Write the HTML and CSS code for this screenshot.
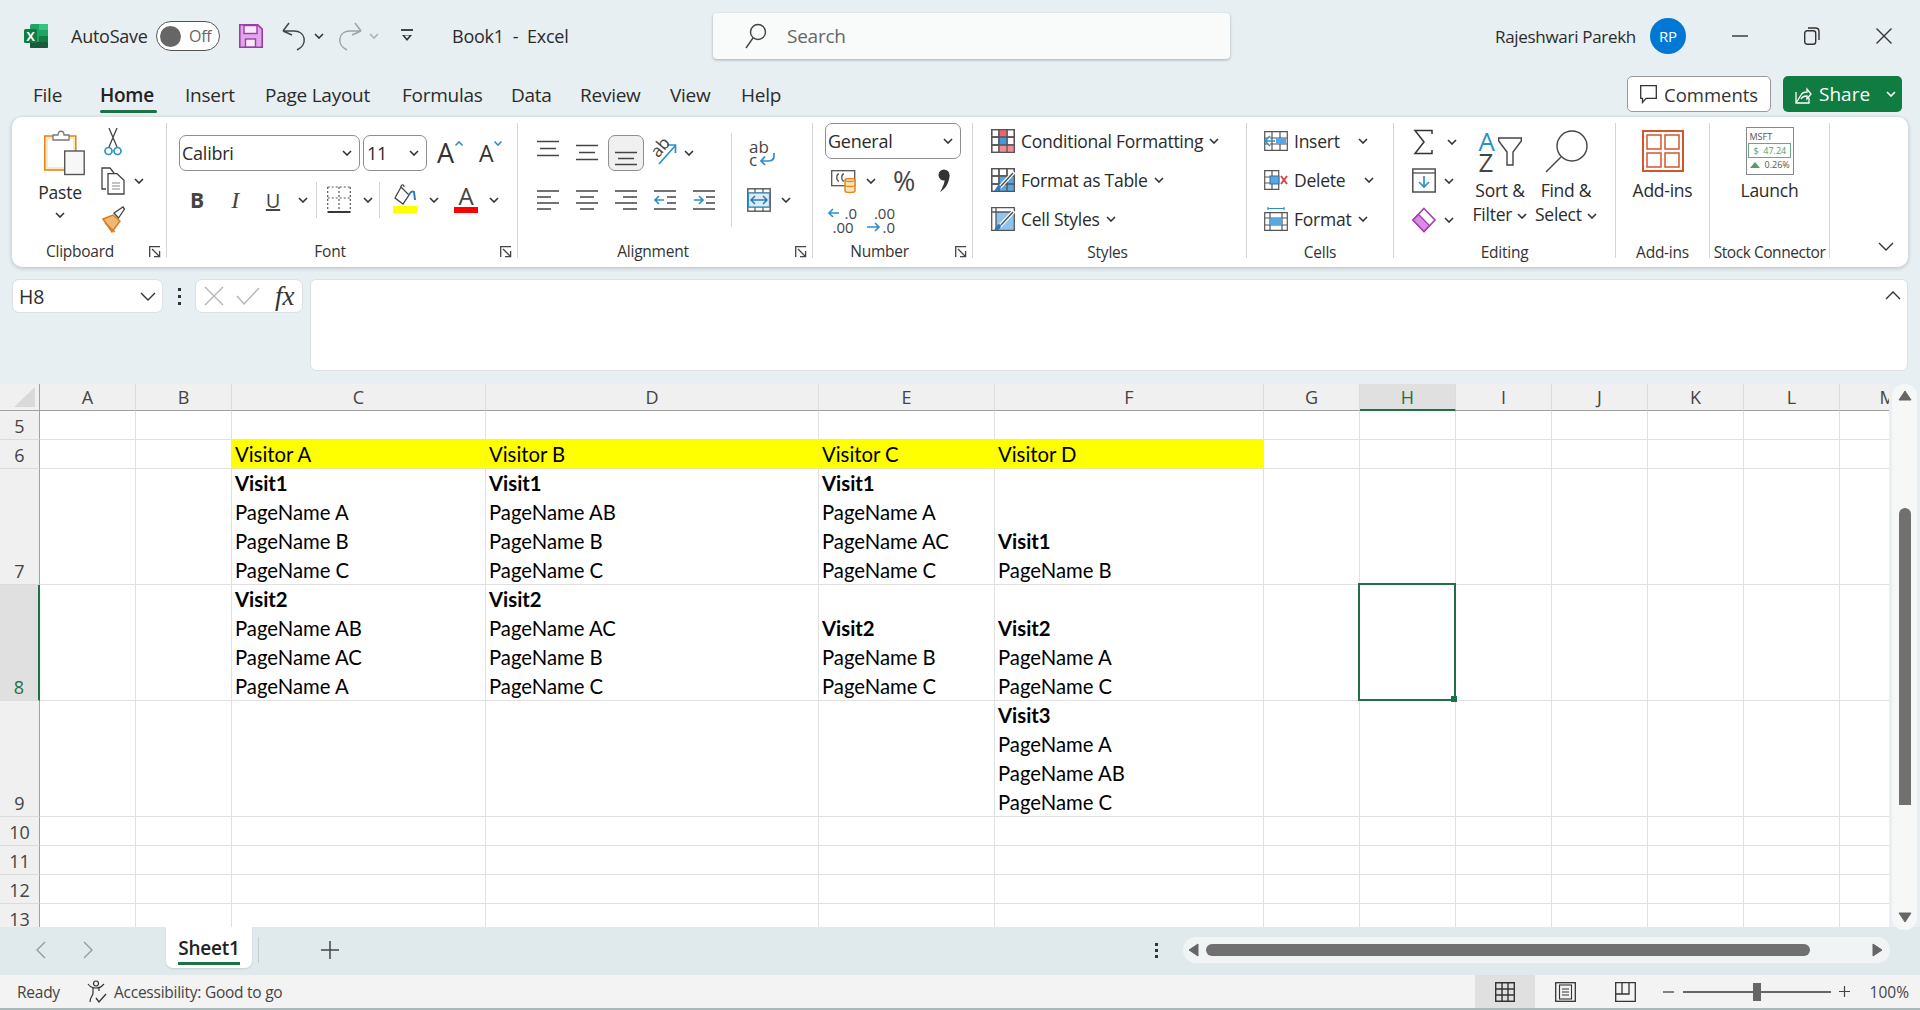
FILE: index.html
```html
<!DOCTYPE html>
<html lang="en">
<head>
<meta charset="utf-8">
<title>Book1 - Excel</title>
<link rel="stylesheet" href="styles.css">
</head>
<body>
<svg class="defs" xmlns="http://www.w3.org/2000/svg">
  <symbol id="chev" viewBox="0 0 10 6"><path d="M1 1l4 4 4-4" fill="none" stroke="currentColor" stroke-width="1.6"/></symbol>
  <symbol id="launch" viewBox="0 0 12 12"><path d="M.7 11V.7H11M3 3l7.5 7.5M10.6 5v5.6H5" fill="none" stroke="#444" stroke-width="1.3"/></symbol>
  <symbol id="grid" viewBox="0 0 24 24"><path d="M.7.7h22.6v22.6H.7zM.7 8h22.6M.7 16h22.6M8 .7v22.6M16 .7v22.6" fill="none" stroke="#555" stroke-width="1.3"/></symbol>
</svg>

<header class="titlebar">
  <div class="tb-left">
    <svg class="logo" viewBox="0 0 24 24"><rect x="6" width="18" height="24" rx="1.5" fill="#21a366"/><rect x="15" width="9" height="6" fill="#33c481"/><rect x="15" y="12" width="9" height="6" fill="#107c41"/><rect x="6" y="18" width="18" height="6" rx="1" fill="#185c37"/><rect y="5" width="13" height="14" rx="1.5" fill="#107c41"/><text x="6.5" y="16.5" class="logo-x" text-anchor="middle">X</text></svg>
    <span class="autosave">AutoSave</span>
    <div class="toggle"><i class="knob"></i><span>Off</span></div>
    <svg class="save" viewBox="0 0 24 24"><path d="M.8.8h18l4.4 4.4v18H.8z" fill="#e3a6e8" stroke="#9c3cab" stroke-width="1.6"/><rect x="5" y="1.5" width="13" height="8" fill="#f7eaf8" stroke="#9c3cab" stroke-width="1.4"/><rect x="6.500" y="15" width="10" height="8" fill="#f7eaf8" stroke="#9c3cab" stroke-width="1.4"/></svg>
    <svg class="undo" viewBox="0 0 24 30"><path d="M1 10l6-8M1 10l9 4M1 10h11c12 0 14 14 3 19" fill="none" stroke="#444" stroke-width="1.5"/></svg>
    <svg class="chev qa1"><use href="#chev"/></svg>
    <svg class="undo redo" viewBox="0 0 24 30"><path d="M23 10l-6-8M23 10l-9 4M23 10H12C0 10-2 24 9 29" fill="none" stroke="#a3a3a3" stroke-width="1.5"/></svg>
    <svg class="chev qa2"><use href="#chev"/></svg>
    <svg class="custom" viewBox="0 0 12 14"><path d="M0 1h12" stroke="#333" stroke-width="1.8"/><path d="M1 6h10l-5 6z" fill="#333"/><path d="M3.500 6.500h5L6 9.500z" fill="#e7eff2"/></svg>
    <span class="doc">Book1&nbsp; -&nbsp; Excel</span>
  </div>
  <div class="search">
    <svg class="search-ico" viewBox="0 0 22 26"><circle cx="13" cy="9" r="7.500" fill="none" stroke="#444" stroke-width="1.4"/><path d="M8 15L1 25" stroke="#444" stroke-width="1.4"/></svg>
    <span>Search</span>
  </div>
  <div class="tb-right">
    <span class="user">Rajeshwari Parekh</span>
    <span class="avatar">RP</span>
    <div class="win"><svg width="16" height="4"><path d="M0 2h16" stroke="#333" stroke-width="1.4"/></svg></div>
    <div class="win"><svg width="16" height="18" viewBox="0 0 16 18"><rect x=".7" y="3.700" width="11" height="13.500" rx="2.500" fill="none" stroke="#333" stroke-width="1.4"/><path d="M4 1h7.500c2 0 3.500 1 3.500 3.500V13" fill="none" stroke="#333" stroke-width="1.4"/></svg></div>
    <div class="win"><svg width="16" height="16"><path d="M.5.5l15 15M15.500.5l-15 15" stroke="#333" stroke-width="1.4"/></svg></div>
  </div>
</header>

<nav class="tabs">
  <a class="tab t-file">File</a>
  <a class="tab t-home active"><span>Home</span></a>
  <a class="tab t-insert">Insert</a>
  <a class="tab t-page">Page Layout</a>
  <a class="tab t-formulas">Formulas</a>
  <a class="tab t-data">Data</a>
  <a class="tab t-review">Review</a>
  <a class="tab t-view">View</a>
  <a class="tab t-help">Help</a>
  <div class="tab-actions">
    <button class="comments"><svg width="17" height="19" viewBox="0 0 17 19"><path d="M.7.7h15.600v12.600H6L2.500 17.500v-4.200H.7z" fill="none" stroke="#333" stroke-width="1.3"/></svg>Comments</button>
    <button class="share"><svg width="17" height="20" viewBox="0 0 17 20"><path d="M1 8v11h13v-5M1 19l5-8c1-2 3-3 6-3V5l4 5-4 5v-3c-3 0-5 1-6 3" fill="none" stroke="#fff" stroke-width="1.300"/></svg><span>Share</span><svg class="chev"><use href="#chev"/></svg></button>
  </div>
</nav>

<section class="ribbon">
  <div class="group g-clip">
    <div class="body">
      <div class="paste">
        <svg class="paste-ico" width="41" height="45" viewBox="0 0 41 45"><rect x=".8" y="6" width="31" height="34" fill="#fde8c4" stroke="#e08a1e" stroke-width="1.600"/><rect x="4" y="9" width="25" height="28" fill="#fff"/><path d="M9 10V5h5c0-5 6-5 6 0h5v5z" fill="#fff" stroke="#777" stroke-width="1.300"/><rect x="20.700" y="21" width="19.500" height="23.500" fill="#f7f7f7" stroke="#555" stroke-width="1.400"/></svg>
        <span class="paste-l">Paste</span>
        <svg class="chev"><use href="#chev"/></svg>
      </div>
      <div class="rows clip-rows">
        <div class="row"><svg width="18" height="30" viewBox="0 0 18 30"><path d="M5 1l8 19M13 1L5 20" stroke="#444" stroke-width="1.300"/><circle cx="4.500" cy="24" r="3.500" fill="none" stroke="#2e8fc9" stroke-width="1.700"/><circle cx="13.500" cy="24" r="3.500" fill="none" stroke="#2e8fc9" stroke-width="1.700"/></svg></div>
        <div class="row copy-row"><svg width="24" height="28" viewBox="0 0 24 28"><path d="M5 22H1V1h8l4 5" fill="none" stroke="#444" stroke-width="1.300"/><path d="M7 6.700h9l7 6.500V27H7z" fill="#fff" stroke="#444" stroke-width="1.300"/><path d="M11 16h8M11 19h8M11 22h8" stroke="#888" stroke-width="1.200"/></svg><svg class="chev"><use href="#chev"/></svg></div>
        <div class="row brush-row"><svg width="24" height="28" viewBox="0 0 24 28"><path d="M13 7l9-6 1.500 2-6 9z" fill="#fff" stroke="#444" stroke-width="1.300"/><path d="M2 13l10-4 7 6-8 11z" fill="#f0b878" stroke="#d97c1c" stroke-width="1.500"/><path d="M4 17l10 9" stroke="#d97c1c" stroke-width="1.500"/></svg></div>
      </div>
    </div>
    <div class="label pr18">Clipboard</div>
    <svg class="launch"><use href="#launch"/></svg>
  </div>

  <div class="group g-font">
    <div class="body two-rows">
      <div class="r2">
        <div class="select s-font"><span>Calibri</span><svg class="chev"><use href="#chev"/></svg></div>
        <div class="select s-size"><span>11</span><svg class="chev"><use href="#chev"/></svg></div>
        <div class="grow"><span>A</span><svg width="8" height="5"><path d="M.5 4.500l3.500-3.500 3.500 3.500" fill="none" stroke="#2e8fc9" stroke-width="1.600"/></svg></div>
        <div class="grow shrink"><span>A</span><svg width="8" height="5"><path d="M.5.5l3.500 3.500 3.500-3.500" fill="none" stroke="#2e8fc9" stroke-width="1.600"/></svg></div>
      </div>
      <div class="r2 fmt-row">
        <b class="slot38 f-b">B</b>
        <i class="slot38 f-i">I</i>
        <u class="slot38 f-u">U</u>
        <div class="slot22"><svg class="chev"><use href="#chev"/></svg></div>
        <div class="vsep"></div>
        <div class="slot40"><svg width="24" height="28" viewBox="0 0 24 28"><path d="M.7 1h22.600M.7 1v22M23.300 1v22M12 1v22M.7 12h22.600" stroke="#555" stroke-width="1.200" stroke-dasharray="2 2" fill="none"/><path d="M.5 26h23" stroke="#222" stroke-width="1.800"/></svg></div>
        <div class="slot18"><svg class="chev"><use href="#chev"/></svg></div>
        <div class="vsep"></div>
        <div class="slot40 fill-slot"><svg width="24" height="30" viewBox="0 0 24 30"><path d="M8 2l8 8-6 9-8-6z" fill="#fff" stroke="#444" stroke-width="1.300"/><path d="M8 2c0-3 3-3 3 0" fill="none" stroke="#444" stroke-width="1.200"/><path d="M16 10c1-3 3-4 5-3l1 8" fill="none" stroke="#2e78b8" stroke-width="2"/><rect y="21" width="24" height="7" fill="#ffff00"/></svg></div>
        <div class="slot18"><svg class="chev"><use href="#chev"/></svg></div>
        <div class="font-color"><span>A</span><i></i></div>
        <div class="slot18"><svg class="chev"><use href="#chev"/></svg></div>
      </div>
    </div>
    <div class="label pr24">Font</div>
    <svg class="launch"><use href="#launch"/></svg>
  </div>

  <div class="group g-align">
    <div class="al-left two-rows">
      <div class="r2">
        <div class="slot39"><svg width="22" height="26"><path d="M0 1.500h22M3 8.500h16M0 15.500h22" stroke="#444" stroke-width="1.600"/></svg></div>
        <div class="slot39"><svg width="22" height="26"><path d="M0 5.500h22M3 12.500h16M0 19.500h22" stroke="#444" stroke-width="1.600"/></svg></div>
        <div class="slot39"><div class="active-btn"><svg width="22" height="26"><path d="M0 12.500h22M3 18.500h16M0 24.500h22" stroke="#444" stroke-width="1.600"/></svg></div></div>
        <div class="slot39 orient"><span>ab</span><svg width="26" height="26" viewBox="0 0 26 26"><path d="M7 24L23 6M15 5h8.500v8" fill="none" stroke="#2e8fc9" stroke-width="1.700"/></svg></div>
        <svg class="chev al-chev"><use href="#chev"/></svg>
      </div>
      <div class="r2">
        <div class="slot39"><svg width="22" height="22"><path d="M0 2h22M0 8h14M0 14h22M0 20h14" stroke="#444" stroke-width="1.600"/></svg></div>
        <div class="slot39"><svg width="22" height="22"><path d="M0 2h22M4 8h14M0 14h22M4 20h14" stroke="#444" stroke-width="1.600"/></svg></div>
        <div class="slot39"><svg width="22" height="22"><path d="M0 2h22M8 8h14M0 14h22M8 20h14" stroke="#444" stroke-width="1.600"/></svg></div>
        <div class="slot39"><svg width="22" height="22"><path d="M0 2h22M13 8h9M13 14h9M0 20h22" stroke="#444" stroke-width="1.600"/><path d="M1 11h9M5 7l-4 4 4 4" fill="none" stroke="#2e8fc9" stroke-width="1.700"/></svg></div>
        <div class="slot39"><svg width="22" height="22"><path d="M0 2h22M13 8h9M13 14h9M0 20h22" stroke="#444" stroke-width="1.600"/><path d="M1 11h9M6 7l4 4-4 4" fill="none" stroke="#2e8fc9" stroke-width="1.700"/></svg></div>
      </div>
    </div>
    <div class="vsep tall"></div>
    <div class="al-right two-rows">
      <div class="r2"><div class="slot50"><div class="wrap-ico"><span>ab</span><span>c</span><svg width="15" height="13" viewBox="0 0 15 13"><path d="M14 0v3c0 4-3 5-6 5H1M5 3.500L1 8l4 4" fill="none" stroke="#2e8fc9" stroke-width="1.700"/></svg></div></div></div>
      <div class="r2"><div class="slot44"><svg width="24" height="24" viewBox="0 0 24 24"><rect x=".8" y=".8" width="22.400" height="22.400" fill="#fff" stroke="#555" stroke-width="1.400"/><path d="M.8 5h22.400M.8 19h22.400M8 .8V5M16 .8V5M8 19v4M16 19v4" stroke="#555" stroke-width="1.200"/><rect x="1.500" y="5" width="21" height="14" fill="#dcecf7" stroke="#2e8fc9" stroke-width="1.200"/><path d="M4 12h16M8 8l-4 4 4 4M16 8l4 4-4 4" fill="none" stroke="#2e78b8" stroke-width="1.500"/></svg></div><svg class="chev"><use href="#chev"/></svg></div>
    </div>
    <div class="label abs-label pr24">Alignment</div>
    <svg class="launch"><use href="#launch"/></svg>
  </div>

  <div class="group g-num">
    <div class="body rows num-rows">
      <div class="row"><div class="select s-gen"><span>General</span><svg class="chev"><use href="#chev"/></svg></div></div>
      <div class="row">
        <div class="slot36"><svg width="25" height="26" viewBox="0 0 25 26"><rect x=".7" y="2.700" width="23" height="15" fill="#fff" stroke="#555" stroke-width="1.300"/><path d="M8 6c-3 0-3 7 0 7M13 6c-3 0-3 7 0 7" fill="none" stroke="#555" stroke-width="1.300"/><path d="M14 12c0-2 10-2 10 0v11c0 2-10 2-10 0z" fill="#fbe3bd" stroke="#e08a1e" stroke-width="1.500"/><path d="M14 12c0 2 10 2 10 0M14 17c0 2 10 2 10 0" fill="none" stroke="#e08a1e" stroke-width="1.300"/></svg></div>
        <div class="slot20"><svg class="chev"><use href="#chev"/></svg></div>
        <div class="slot46 pct">%</div>
        <div class="slot34"><svg width="12" height="24" viewBox="0 0 12 24"><circle cx="6" cy="6" r="5.500" fill="#333"/><path d="M11.500 6C11.500 14 7 20 2 23 5 18 7 13 7 8z" fill="#333"/></svg></div>
      </div>
      <div class="row">
        <div class="slot36"><div class="dec-ico"><span class="dec-r">.0</span><span>.00</span><svg class="dec-top" width="12" height="12" viewBox="0 0 12 12"><path d="M11 6H1M5 2L1 6l4 4" fill="none" stroke="#2e8fc9" stroke-width="1.600"/></svg></div></div>
        <div class="slot40"><div class="dec-ico"><span class="dec-r">.00</span><span class="dec-r">.0</span><svg class="dec-bot" width="14" height="12" viewBox="0 0 14 12"><path d="M1 6h12M9 2l4 4-4 4" fill="none" stroke="#2e8fc9" stroke-width="1.600"/></svg></div></div>
      </div>
    </div>
    <div class="label pr26">Number</div>
    <svg class="launch"><use href="#launch"/></svg>
  </div>

  <div class="group g-styles">
    <div class="body rows">
      <div class="row ti"><svg width="24" height="24"><use href="#grid"/><rect x="8" y="1" width="8" height="7" fill="#f1636c"/><rect x="8" y="8" width="8" height="8" fill="#3f9be0"/><rect x="8" y="16" width="15" height="7" fill="#f58b92"/><use href="#grid"/></svg><span>Conditional Formatting</span><svg class="chev"><use href="#chev"/></svg></div>
      <div class="row ti"><svg width="24" height="24" viewBox="0 0 24 24"><use href="#grid"/><path d="M8 8h15v15H8z" fill="#5aa6e0"/><use href="#grid"/><path d="M23 4L8 20" stroke="#fff" stroke-width="4"/><path d="M22 5L10 18" stroke="#555" stroke-width="1.500"/><path d="M3 23c3 0 7 0 7-5l-2-1c-2 0-2 3-5 6z" fill="#2e78b8"/></svg><span>Format as Table</span><svg class="chev"><use href="#chev"/></svg></div>
      <div class="row ti"><svg width="24" height="24" viewBox="0 0 24 24"><path d="M5 5h18v18H5z" fill="#8cc4ee"/><path d="M.7.7h22.600v22.600H.7zM.7 5h22.600M5 .7v22.600" fill="none" stroke="#555" stroke-width="1.300"/><path d="M23 4L8 20" stroke="#fff" stroke-width="4"/><path d="M22 5L10 18" stroke="#555" stroke-width="1.500"/><path d="M3 23c3 0 7 0 7-5l-2-1c-2 0-2 3-5 6z" fill="#2e78b8"/></svg><span>Cell Styles</span><svg class="chev"><use href="#chev"/></svg></div>
    </div>
    <div class="label low pr4">Styles</div>
  </div>

  <div class="group g-cells">
    <div class="body rows">
      <div class="row ti"><svg width="24" height="20" viewBox="0 0 24 20"><path d="M.7.700h22.600v18.600H.7zM.7 7h22.600M.7 13h22.600M8 .7v18.600M16 .7v18.600" fill="none" stroke="#555" stroke-width="1.200"/><rect x="12" y="7" width="10" height="6" fill="#5aa6e0"/><path d="M1 10h10M6 5l-5 5 5 5" fill="#fff" stroke="#2e8fc9" stroke-width="1.600"/></svg><span class="w58">Insert</span><svg class="chev"><use href="#chev"/></svg></div>
      <div class="row ti"><svg width="24" height="20" viewBox="0 0 24 20"><path d="M.7.700h14v18.600H.7zM.7 7h14M.7 13h14M8 .7v18.600" fill="none" stroke="#555" stroke-width="1.200"/><rect x="6" y="6" width="9" height="8" fill="#5aa6e0" stroke="#2e6fa8"/><path d="M17 6l6 8M23 6l-6 8" stroke="#e04040" stroke-width="2"/></svg><span class="w64">Delete</span><svg class="chev"><use href="#chev"/></svg></div>
      <div class="row ti"><svg width="24" height="24" viewBox="0 0 24 24"><path d="M.7 5.700h22.600v17.600H.7zM.7 11h22.600M.7 18h22.600M6 5.700v17.600M18 5.700v17.600" fill="none" stroke="#555" stroke-width="1.200"/><rect x="6" y="11" width="12" height="7" fill="#5aa6e0"/><path d="M4 1.500h16M4 0v3M20 0v3" stroke="#2e8fc9" stroke-width="1.200"/></svg><span class="w58">Format</span><svg class="chev"><use href="#chev"/></svg></div>
    </div>
    <div class="label low">Cells</div>
  </div>

  <div class="group g-edit">
    <div class="body">
      <div class="rows edit-rows">
        <div class="row sum-row"><svg width="24" height="26" viewBox="0 0 24 26"><path d="M20 5V1.500H3L12 13 3 24.500h17V21" fill="none" stroke="#333" stroke-width="1.500"/></svg><svg class="chev"><use href="#chev"/></svg></div>
        <div class="row"><svg width="24" height="26" viewBox="0 0 24 26"><rect x=".8" y="1" width="22.400" height="23" fill="#fff" stroke="#444" stroke-width="1.400"/><path d="M.8 5h22.400" stroke="#444" stroke-width="1.200"/><path d="M12 8v11M7 14l5 5 5-5" fill="none" stroke="#2e8fc9" stroke-width="1.700"/></svg><svg class="chev"><use href="#chev"/></svg></div>
        <div class="row"><svg width="24" height="26" viewBox="0 0 24 26"><path d="M12 1.500L23 13 12 24.500 1 13z" fill="#fff" stroke="#a43bb4" stroke-width="1.600"/><path d="M1 13l5.500-5.500 11 11L12 24.500z" fill="#d98ce2" stroke="#a43bb4" stroke-width="1.300"/></svg><svg class="chev"><use href="#chev"/></svg></div>
      </div>
      <div class="big b-sort">
        <div class="sort-ico"><div class="az"><span class="blue">A</span><span>Z</span></div><svg width="24" height="30" viewBox="0 0 24 30"><path d="M.7 1h22.600v3L15 15v13H9V15L.7 4z" fill="#fff" stroke="#444" stroke-width="1.400"/></svg></div>
        <span>Sort &amp;</span>
        <span>Filter <svg class="chev"><use href="#chev"/></svg></span>
      </div>
      <div class="big b-find">
        <svg width="43" height="43" viewBox="0 0 43 43"><circle cx="27" cy="16" r="15" fill="#fff" stroke="#444" stroke-width="1.400"/><path d="M16 27L1 42" stroke="#444" stroke-width="1.400"/></svg>
        <span>Find &amp;</span>
        <span>Select <svg class="chev"><use href="#chev"/></svg></span>
      </div>
    </div>
    <div class="label low">Editing</div>
  </div>

  <div class="group g-addins">
    <div class="body big-one">
      <svg width="42" height="42" viewBox="0 0 42 42"><rect x="1" y="1" width="40" height="40" fill="#fff" stroke="#d2562c" stroke-width="2"/><rect x="5" y="5" width="14" height="14" fill="#fff" stroke="#d2562c" stroke-width="1.500"/><rect x="23" y="5" width="14" height="14" fill="#fff" stroke="#d2562c" stroke-width="1.500"/><rect x="5" y="23" width="14" height="14" fill="#fff" stroke="#d2562c" stroke-width="1.500"/><rect x="23" y="23" width="14" height="14" fill="#fff" stroke="#d2562c" stroke-width="1.500"/></svg>
      <span>Add-ins</span>
    </div>
    <div class="label low">Add-ins</div>
  </div>

  <div class="group g-stock">
    <div class="body big-one stock">
      <div class="stock-ico">
        <span class="st-sym">MSFT</span>
        <span class="st-price">$&nbsp;&nbsp;47.24</span>
        <span class="st-chg"><svg width="10" height="6"><path d="M0 6l5-6 5 6z" fill="#4f9e6a"/></svg>0.26%</span>
      </div>
      <span>Launch</span>
    </div>
    <div class="label low stock-l">Stock Connector</div>
  </div>

  <div class="ribbon-end"><svg width="16" height="9" viewBox="0 0 16 9"><path d="M1 1l7 7 7-7" fill="none" stroke="#333" stroke-width="1.400"/></svg></div>
</section>

<section class="formula">
  <div class="namebox"><span>H8</span><svg width="16" height="9" viewBox="0 0 16 9"><path d="M1 1l7 7 7-7" fill="none" stroke="#333" stroke-width="1.400"/></svg></div>
  <div class="dots"><i></i><i></i><i></i></div>
  <div class="fxbox">
    <svg width="20" height="20"><path d="M1 1l18 18M19 1L1 19" stroke="#b5b5b5" stroke-width="1.400"/></svg>
    <svg width="24" height="18"><path d="M1 9l7 8L23 1" fill="none" stroke="#b5b5b5" stroke-width="1.400"/></svg>
    <em>fx</em>
  </div>
  <div class="finput"><svg width="16" height="9" viewBox="0 0 16 9"><path d="M1 8l7-7 7 7" fill="none" stroke="#333" stroke-width="1.400"/></svg></div>
</section>

<main class="sheet">
  <div class="grid">
    <div class="corner"><svg width="21" height="20"><path d="M21 0v20H0z" fill="#d9d9d9"/></svg></div>
    <div class="ch">A</div><div class="ch">B</div><div class="ch">C</div><div class="ch">D</div><div class="ch">E</div><div class="ch">F</div><div class="ch">G</div><div class="ch sel">H</div><div class="ch">I</div><div class="ch">J</div><div class="ch">K</div><div class="ch">L</div><div class="ch">M</div>

    <div class="rh">5</div><div class="c"></div><div class="c"></div><div class="c"></div><div class="c"></div><div class="c"></div><div class="c"></div><div class="c"></div><div class="c"></div><div class="c"></div><div class="c"></div><div class="c"></div><div class="c"></div><div class="c"></div>

    <div class="rh">6</div><div class="c"></div><div class="c"></div><div class="c y"><span>Visitor A</span></div><div class="c y"><span>Visitor B</span></div><div class="c y"><span>Visitor C</span></div><div class="c y"><span>Visitor D</span></div><div class="c"></div><div class="c"></div><div class="c"></div><div class="c"></div><div class="c"></div><div class="c"></div><div class="c"></div>

    <div class="rh">7</div><div class="c"></div><div class="c"></div>
    <div class="c"><b>Visit1</b><span>PageName A</span><span>PageName B</span><span>PageName C</span></div>
    <div class="c"><b>Visit1</b><span>PageName AB</span><span>PageName B</span><span>PageName C</span></div>
    <div class="c"><b>Visit1</b><span>PageName A</span><span>PageName AC</span><span>PageName C</span></div>
    <div class="c"><b>Visit1</b><span>PageName B</span></div>
    <div class="c"></div><div class="c"></div><div class="c"></div><div class="c"></div><div class="c"></div><div class="c"></div><div class="c"></div>

    <div class="rh sel">8</div><div class="c"></div><div class="c"></div>
    <div class="c"><b>Visit2</b><span>PageName AB</span><span>PageName AC</span><span>PageName A</span></div>
    <div class="c"><b>Visit2</b><span>PageName AC</span><span>PageName B</span><span>PageName C</span></div>
    <div class="c"><b>Visit2</b><span>PageName B</span><span>PageName C</span></div>
    <div class="c"><b>Visit2</b><span>PageName A</span><span>PageName C</span></div>
    <div class="c"></div>
    <div class="c active-cell"><div class="selection"><i class="handle"></i></div></div>
    <div class="c"></div><div class="c"></div><div class="c"></div><div class="c"></div><div class="c"></div>

    <div class="rh">9</div><div class="c"></div><div class="c"></div><div class="c"></div><div class="c"></div><div class="c"></div>
    <div class="c"><b>Visit3</b><span>PageName A</span><span>PageName AB</span><span>PageName C</span></div>
    <div class="c"></div><div class="c"></div><div class="c"></div><div class="c"></div><div class="c"></div><div class="c"></div><div class="c"></div>

    <div class="rh">10</div><div class="c"></div><div class="c"></div><div class="c"></div><div class="c"></div><div class="c"></div><div class="c"></div><div class="c"></div><div class="c"></div><div class="c"></div><div class="c"></div><div class="c"></div><div class="c"></div><div class="c"></div>
    <div class="rh">11</div><div class="c"></div><div class="c"></div><div class="c"></div><div class="c"></div><div class="c"></div><div class="c"></div><div class="c"></div><div class="c"></div><div class="c"></div><div class="c"></div><div class="c"></div><div class="c"></div><div class="c"></div>
    <div class="rh">12</div><div class="c"></div><div class="c"></div><div class="c"></div><div class="c"></div><div class="c"></div><div class="c"></div><div class="c"></div><div class="c"></div><div class="c"></div><div class="c"></div><div class="c"></div><div class="c"></div><div class="c"></div>
    <div class="rh">13</div><div class="c"></div><div class="c"></div><div class="c"></div><div class="c"></div><div class="c"></div><div class="c"></div><div class="c"></div><div class="c"></div><div class="c"></div><div class="c"></div><div class="c"></div><div class="c"></div><div class="c"></div>
  </div>
  <aside class="vscroll">
    <div class="vtrack">
      <svg width="14" height="11" class="vup"><path d="M7 1l6 9H1z" fill="#666" stroke="#666" stroke-linejoin="round"/></svg>
      <div class="vthumb"></div>
      <svg width="14" height="11" class="vdown"><path d="M7 10l6-9H1z" fill="#666" stroke="#666" stroke-linejoin="round"/></svg>
    </div>
  </aside>
</main>

<footer class="sheetbar">
  <div class="nav"><svg width="11" height="18"><path d="M10 1L2 9l8 8" fill="none" stroke="#999" stroke-width="1.400"/></svg></div>
  <div class="nav"><svg width="11" height="18"><path d="M1 1l8 8-8 8" fill="none" stroke="#999" stroke-width="1.400"/></svg></div>
  <div class="sheet-tab"><span>Sheet1</span></div>
  <div class="tab-sep"></div>
  <svg class="plus" width="18" height="18"><path d="M9 0v18M0 9h18" stroke="#444" stroke-width="1.500"/></svg>
  <div class="vdots"><i></i><i></i><i></i></div>
  <div class="htrack">
    <svg width="11" height="14"><path d="M10 1L1 7l9 6z" fill="#666" stroke="#666" stroke-linejoin="round"/></svg>
    <div class="hthumb"></div>
    <svg width="11" height="14"><path d="M1 1l9 6-9 6z" fill="#666" stroke="#666" stroke-linejoin="round"/></svg>
  </div>
</footer>

<footer class="status">
  <span class="ready">Ready</span>
  <svg class="acc" width="20" height="24" viewBox="0 0 20 24"><circle cx="9" cy="3.500" r="2.500" fill="none" stroke="#333" stroke-width="1.200"/><path d="M1 4c2 3 4 4 8 4s5-1 8-4M6 8v5c0 3-3 4-3 9M12 8v3" fill="none" stroke="#333" stroke-width="1.200"/><path d="M9 18l3 4 7-8" fill="none" stroke="#333" stroke-width="1.300"/></svg>
  <span class="acc-t">Accessibility: Good to go</span>
  <div class="st-right">
    <div class="view on"><svg width="20" height="20"><path d="M.7.700h18.600v18.600H.7zM.7 7h18.600M.7 13h18.600M7 .7v18.600M13 .7v18.600" fill="none" stroke="#333" stroke-width="1.400"/></svg></div>
    <div class="view"><svg width="21" height="20"><rect x=".7" y=".7" width="19.600" height="18.600" fill="none" stroke="#333" stroke-width="1.300"/><rect x="4.500" y="3" width="12" height="14" fill="none" stroke="#333" stroke-width="1.100"/><path d="M7 7h7M7 10h7M7 13h7" stroke="#333"/></svg></div>
    <div class="view"><svg width="21" height="20"><path d="M.7.7h19.600v18.600H.7zM.7 12H14V.7M7 .7V12" fill="none" stroke="#333" stroke-width="1.300"/></svg></div>
    <svg class="zm" width="11" height="2"><path d="M0 1h11" stroke="#444" stroke-width="1.300"/></svg>
    <div class="slider"><i></i></div>
    <svg class="zp" width="11" height="11"><path d="M0 5.500h11M5.500 0v11" stroke="#444" stroke-width="1.200"/></svg>
    <span class="pct100">100%</span>
  </div>
</footer>
</body>
</html>
```

FILE: styles.css
```css
* { box-sizing: border-box; }
html, body { margin: 0; padding: 0; }
body {
  width: 1920px; height: 1010px; overflow: hidden;
  display: flex; flex-direction: column;
  background: #e7eff2; color: #2b2b2b;
  font-family: "Open Sans", "Noto Sans", sans-serif;
  font-size: 17px; letter-spacing: -.25px;
}
svg { display: block; flex: none; overflow: visible; }
.defs { display: none; }
.chev { width: 10px; height: 6px; color: #333; }

/* title bar */
.titlebar { height: 72px; display: flex; align-items: center; flex: none; }
.tb-left { width: 713px; display: flex; align-items: center; padding-left: 24px; flex: none; }
.logo { width: 24px; height: 24px; }
.logo-x { fill: #fff; font: 700 13px "Liberation Sans", sans-serif; }
.autosave { width: 85px; margin-left: 23px; font-size: 18px; }
.toggle { width: 64px; height: 30px; border: 1.5px solid #555; border-radius: 15px; background: #fff; display: flex; align-items: center; padding-left: 3px; }
.knob { width: 21px; height: 21px; margin-right: 8px; border-radius: 50%; background: #666; flex: none; }
.toggle span { font-size: 16px; color: #666; }
.save { width: 24px; height: 24px; margin-left: 19px; }
.undo { width: 24px; height: 30px; margin-left: 19px; }
.qa1 { margin-left: 8px; }
.redo { margin-left: 14px; }
.qa2 { margin-left: 7px; color: #b0b0b0; }
.custom { width: 12px; height: 14px; margin-left: 22px; }
.doc { margin-left: 39px; font-size: 18px; }
.search { width: 517px; height: 46px; background: #f9fafa; border-radius: 4px; box-shadow: 0 1px 3px rgba(0,0,0,.28); display: flex; align-items: center; padding-left: 32px; color: #666; font-size: 19px; flex: none; }
.search-ico { width: 22px; height: 26px; margin-right: 20px; }
.tb-right { margin-left: auto; display: flex; align-items: center; }
.user { margin-right: 14px; font-size: 17px; letter-spacing: -.3px; }
.avatar { width: 36px; height: 36px; margin-right: 18px; border-radius: 50%; background: #0078d4; color: #fff; display: flex; align-items: center; justify-content: center; font-size: 15px; }
.win { width: 72px; display: flex; justify-content: center; }

/* tabs */
.tabs { height: 45px; display: flex; align-items: center; flex: none; padding: 0 18px 0 33px; font-size: 19px; }
.tab { display: block; flex: none; }
.t-file { width: 67px; }
.t-home { width: 85px; font-weight: 600; color: #222; }
.t-home span { position: relative; display: block; width: 57px; }
.t-home span::after { content: ""; position: absolute; left: 0; right: 0; bottom: -5px; height: 3px; border-radius: 2px; background: #1e7145; }
.t-insert { width: 80px; }
.t-page { width: 137px; }
.t-formulas { width: 109px; }
.t-data { width: 69px; }
.t-review { width: 90px; }
.t-view { width: 71px; }
.t-help { width: 60px; }
.tab-actions { margin-left: auto; display: flex; gap: 12px; align-self: flex-start; padding-top: 4px; }
.comments, .share { height: 36px; border-radius: 5px; display: flex; align-items: center; font: inherit; padding: 0; }
.comments { width: 144px; background: #fff; border: 1px solid #999; gap: 7px; padding-left: 12px; color: #333; font-size: 18.500px; }
.share { width: 119px; background: #107c41; border: 0; color: #fff; padding-left: 12px; gap: 7px; font-size: 19px; }
.share .chev { color: #fff; margin-left: 9px; }

/* ribbon */
.ribbon { height: 150px; margin: 0 12px; padding-top: 6px; background: #fff; border-radius: 10px; box-shadow: 0 1px 4px rgba(0,0,0,.22); display: flex; flex: none; font-size: 17.500px; }
.group { position: relative; height: 135px; border-right: 1px solid #d4d4d4; flex: none; }
.body { height: 115px; display: flex; }
.label { height: 26px; line-height: 26px; text-align: center; font-size: 15.500px; color: #333; white-space: nowrap; }
.abs-label { position: absolute; left: 0; right: 0; top: 115px; }
.low { margin-top: 1px; }
.pr18 { padding-right: 18px; }
.pr24 { padding-right: 24px; }
.pr26 { padding-right: 26px; }
.pr4 { padding-right: 4px; }
.launch { position: absolute; right: 5px; bottom: 0; width: 12px; height: 12px; }
.rows { display: grid; grid-auto-rows: 39px; margin-top: -1px; }
.body.rows { height: 116px; }
.g-styles .body.rows, .g-cells .body.rows { height: 117px; margin-top: -2px; }
.row { display: flex; align-items: center; }
.r2 { height: 36px; display: flex; align-items: center; }
.two-rows { display: flex; flex-direction: column; gap: 11px; padding-top: 12px; }
.g-clip { width: 155px; }
.g-font { width: 351px; }
.g-align { width: 295px; display: flex; padding-left: 10px; }
.g-num { width: 160px; }
.g-styles { width: 274px; }
.g-cells { width: 147px; }
.g-edit { width: 222px; }
.g-addins { width: 94px; }
.g-stock { width: 120px; }
.ribbon-end { flex: 1; display: flex; justify-content: flex-end; align-items: flex-end; padding: 0 14px 16px 0; }

.paste { width: 72px; margin-left: 12px; display: flex; flex-direction: column; align-items: center; padding-top: 7px; }
.paste-ico { margin-left: 9px; }
.paste-l { margin-top: 4px; line-height: 26px; }
.paste .chev { margin-top: 7px; }
.clip-rows { width: 50px; }
.clip-rows .row { padding-left: 8px; }
.clip-rows .copy-row { gap: 9px; padding-left: 5px; }
.clip-rows .brush-row { padding-left: 5px; }

.g-font .body { flex-direction: column; padding-left: 12px; }
.select { height: 36px; border: 1px solid #8e8e8e; border-radius: 7px; display: flex; align-items: center; justify-content: space-between; padding: 0 7px 0 2px; font-size: 18px; background: #fff; }
.s-font { width: 181px; }
.s-size { width: 64px; margin-left: 3px; padding-left: 3px; }
.s-gen { width: 136px; margin-top: -2px; }
.grow { width: 40px; margin-left: 10px; display: flex; align-items: flex-start; font-size: 27px; line-height: 30px; color: #333; }
.grow svg { margin: 3px 0 0 1px; }
.shrink { font-size: 23px; margin-left: 0; padding-left: 2px; }
.fmt-row { margin-left: -1px; }
.slot38, .slot22, .slot40, .slot18, .slot39, .slot50, .slot44, .slot36, .slot20, .slot46, .slot34 { display: flex; align-items: center; justify-content: center; flex: none; }
.slot38 { width: 38px; font-size: 21px; font-style: normal; text-decoration: none; color: #444; }
.f-b { font-weight: 700; }
.f-i { font-family: "Liberation Serif", serif; font-style: italic; font-size: 24px; }
.f-u { text-decoration: underline; font-size: 20px; }
.slot22 { width: 22px; }
.slot40 { width: 40px; }
.slot18 { width: 18px; }
.fill-slot { margin-left: 3px; }
.vsep { width: 1px; height: 36px; background: #d4d4d4; margin: 0 2px; flex: none; }
.font-color { width: 30px; margin: 0 4px 3px 8px; display: flex; flex-direction: column; align-items: center; font-size: 24px; line-height: 24px; color: #444; }
.font-color i { display: block; width: 24px; height: 6px; margin-top: -1px; background: #f00; }
.slot39 { width: 39px; height: 36px; }
.active-btn { width: 36px; height: 36px; border: 1px solid #8e8e8e; border-radius: 7px; background: #f0f0f0; display: flex; align-items: center; justify-content: center; }
.orient { position: relative; }
.orient span { position: absolute; left: 5px; top: 2px; font-size: 17px; line-height: 20px; color: #444; letter-spacing: 0; transform: rotate(-50deg); }
.al-left { width: 203px; flex: none; }
.tall { height: 94px; margin: 10px 0 0; }
.al-right { padding-left: 5px; }
.slot50 { width: 50px; height: 36px; }
.slot44 { width: 44px; }
.wrap-ico { position: relative; width: 26px; height: 26px; font-size: 17px; line-height: 13px; color: #444; letter-spacing: 0; }
.wrap-ico span { display: block; }
.wrap-ico svg { position: absolute; right: 0; bottom: 0; }
.g-num .body { padding-left: 12px; display: grid; }
.slot36 { width: 36px; }
.slot20 { width: 20px; }
.slot46 { width: 46px; }
.slot34 { width: 34px; }
.pct { font-size: 27px; color: #444; }
.dec-ico { position: relative; width: 28px; height: 28px; font-size: 15px; line-height: 14px; color: #444; letter-spacing: 0; }
.dec-ico span { display: block; text-align: center; }
.dec-ico .dec-r { text-align: right; }
.dec-top { position: absolute; left: -1px; top: 1px; }
.dec-bot { position: absolute; left: -1px; bottom: 1px; }
.g-styles .row { padding-left: 18px; }
.g-cells .row { padding-left: 17px; }
.ti { gap: 6px; white-space: nowrap; }
.ti span { display: block; }
.w58 { width: 58px; }
.w64 { width: 64px; }
.edit-rows { width: 53px; margin-left: 18px; flex: none; }
.edit-rows .row { gap: 8px; }
.edit-rows .sum-row { gap: 11px; }
.big, .big-one { display: flex; flex-direction: column; align-items: center; padding-top: 7px; line-height: 24px; }
.big > svg, .big > .sort-ico, .big-one > svg { margin-bottom: 5px; }
.big span { white-space: nowrap; }
.big span .chev { display: inline-block; vertical-align: 2px; margin-left: 1px; }
.b-sort { width: 70px; }
.b-find { width: 62px; }
.big-one { width: 100%; }
.big-one > svg { margin-bottom: 6px; }
.sort-ico { height: 43px; display: flex; align-items: flex-end; }
.sort-ico svg { margin: 0 0 6px 0; }
.az { width: 19px; font-size: 26px; line-height: 21px; color: #444; letter-spacing: 0; }
.az span { display: block; }
.az .blue { color: #2e8fc9; }
.stock { padding-top: 4px; }
.stock-ico { width: 48px; height: 48px; margin-bottom: 3px; border: 1px solid #888; background: #fff; display: flex; flex-direction: column; font-size: 9px; line-height: 11px; color: #555; letter-spacing: 0; padding: 3px 1px 0; }
.st-sym { padding-left: 2px; }
.st-price { height: 15px; margin-top: 1px; border: 1px solid #6aa97f; color: #4f9e6a; padding-left: 5px; line-height: 13px; width: 43px; white-space: nowrap; }
.st-chg { display: flex; align-items: center; gap: 5px; margin-top: 1px; padding-left: 2px; }
.stock-l { font-size: 15.500px; letter-spacing: -.45px; }

/* formula bar */
.formula { height: 117px; padding: 12px 12px 0; display: flex; flex: none; }
.namebox { width: 151px; height: 34px; background: #fff; border: 1px solid #dbe1e3; border-radius: 7px; display: flex; align-items: center; justify-content: space-between; padding: 0 6px 0 6px; font-size: 19.500px; }
.dots { width: 32px; height: 34px; display: flex; flex-direction: column; align-items: center; justify-content: center; gap: 4px; }
.dots i, .vdots i { display: block; width: 3px; height: 3px; background: #333; }
.fxbox { width: 108px; height: 34px; background: #fff; border: 1px solid #dbe1e3; border-radius: 7px; display: flex; align-items: center; padding-left: 8px; gap: 12px; }
.fxbox em { font: italic 27px "Liberation Serif", serif; color: #333; margin-left: 3px; letter-spacing: 0; }
.finput { width: 1598px; height: 92px; margin-left: 7px; background: #fff; border: 1px solid #dbe1e3; border-radius: 6px; display: flex; justify-content: flex-end; padding: 11px 6px 0 0; }

/* sheet */
.sheet { position: relative; z-index: 1; height: 543px; display: flex; flex: none; }
.grid { width: 1889px; height: 543px; overflow: hidden; display: grid; flex: none; background: #fff;
  grid-template-columns: 40px 96px 96px 254px 333px 176px 269px repeat(7, 96px);
  grid-template-rows: 27px 29px 29px 116px 116px 116px 29px 29px 29px 29px; }
.corner { background: #f0f0f0; border-right: 1px solid #a0a0a0; border-bottom: 1px solid #a0a0a0; display: flex; justify-content: flex-end; align-items: flex-end; padding: 0 4px 3px 0; }
.ch { background: #f0f0f0; border-bottom: 1px solid #a0a0a0; border-right: 1px solid #dcdcdc; display: flex; align-items: center; justify-content: center; font-size: 18px; color: #444; letter-spacing: 0; }
.ch.sel { background: #e0e0e0; color: #1e7145; border-bottom: 2px solid #1e7145; }
.rh { background: #f0f0f0; border-right: 1px solid #a0a0a0; border-bottom: 1px solid #dcdcdc; display: flex; align-items: flex-end; justify-content: center; font-size: 18px; line-height: 26px; color: #444; letter-spacing: 0; }
.rh.sel { background: #e0e0e0; color: #1e7145; border-right: 2px solid #1e7145; }
.c { border-right: 1px solid #e0e0e0; border-bottom: 1px solid #e0e0e0; display: flex; flex-direction: column; justify-content: flex-end; padding-left: 3px; font-family: Lato, "Open Sans", sans-serif; font-size: 20.300px; line-height: 29px; color: #000; letter-spacing: 0; white-space: nowrap; background: #fff; }
.c > :last-child { margin-bottom: -1px; }
.c b { font-weight: 700; }
.y { background: #ff0; border-right-color: #ff0; border-bottom-color: #e8e8a0; }
.active-cell { position: relative; }
.selection { position: absolute; left: -2px; top: -2px; right: -1px; bottom: -1px; border: 2px solid #1e6f4a; z-index: 2; }
.c > .selection:last-child { margin-bottom: 0; }
.handle { position: absolute; right: -3px; bottom: -3px; width: 6px; height: 6px; background: #1e6f4a; }
.vscroll { width: 31px; flex: none; padding: 0 3px; }
.vtrack { height: 546px; background: #f6f7f7; border-radius: 12px; display: flex; flex-direction: column; align-items: center; padding-top: 6px; }
.vthumb { width: 12px; height: 297px; margin-top: 107px; border-radius: 6px 6px 0 0; background: #707070; }
.vdown { margin-top: 107px; }

/* sheet tabs */
.sheetbar { height: 48px; background: #e0eaec; display: flex; align-items: center; flex: none; padding: 0 30px 2px 16px; }
.nav { width: 48px; display: flex; justify-content: center; }
.sheet-tab { width: 86px; height: 41px; margin-left: 54px; align-self: flex-start; background: #fff; border-radius: 0 0 7px 7px; display: flex; flex-direction: column; align-items: center; font-weight: 600; font-size: 19px; padding-top: 9px; box-shadow: 0 1px 2px rgba(0,0,0,.12); color: #222; }
.sheet-tab span { width: 62px; height: 29px; border-bottom: 3px solid #1e7145; text-align: center; line-height: 24px; white-space: nowrap; }
.tab-sep { width: 1px; height: 26px; margin-left: 6px; background: #c4cccc; }
.plus { margin-left: 62px; }
.vdots { margin-left: auto; margin-right: 20px; width: 14px; display: flex; flex-direction: column; align-items: center; gap: 3px; }
.htrack { width: 707px; height: 26px; background: #f1f4f4; border-radius: 13px; display: flex; align-items: center; padding: 0 7px 0 5px; }
.hthumb { width: 604px; height: 12px; margin: 0 auto 0 7px; border-radius: 6px; background: #707070; }

/* status bar */
.status { height: 35px; background: #f3f3f3; border-bottom: 2px solid #a9b9b9; display: flex; align-items: center; flex: none; font-size: 15.500px; color: #444; padding-left: 17px; }
.ready { width: 70px; }
.acc { margin-right: 7px; }
.st-right { margin-left: auto; display: flex; align-items: center; height: 100%; }
.view { width: 60px; height: 100%; display: flex; align-items: center; justify-content: center; }
.view.on { background: #e0e0e0; }
.zm { margin: 0 9.500px 0 7.500px; }
.slider { position: relative; width: 148px; height: 2px; background: #666; }
.slider i { position: absolute; left: 70px; top: -8px; width: 8px; height: 18px; background: #666; }
.zp { margin-left: 7.500px; }
.pct100 { margin: 0 11px 0 20px; letter-spacing: 0; }
```
